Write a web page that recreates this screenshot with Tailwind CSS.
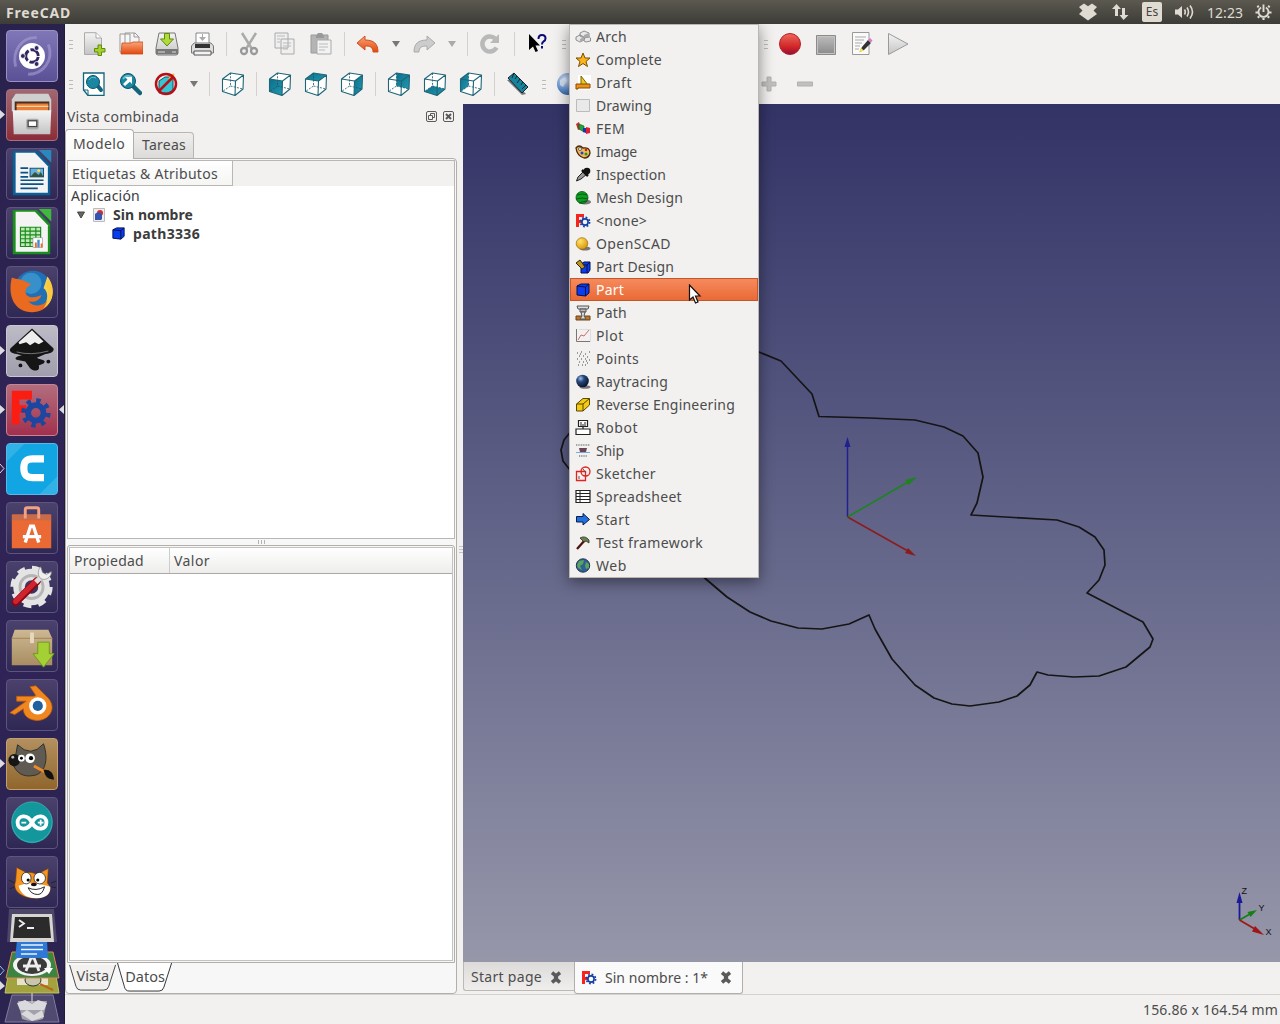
<!DOCTYPE html>
<html lang="es">
<head>
<meta charset="utf-8">
<title>FreeCAD</title>
<script src="https://cdn.jsdelivr.net/npm/@tailwindcss/browser@4"></script>
</head>
<body class="w-[1280px] h-[1024px] overflow-hidden flex flex-col bg-[#f2f1f0] text-[#4c4c4c] font-['Noto_Sans',sans-serif] text-[14px] leading-[19px]">

<svg class="absolute size-0">
  <defs>
    <linearGradient id="teal" x1="0" y1="0" x2="1" y2="1"><stop stop-color="#0b6f8a"/><stop offset="1" stop-color="#2397b0"/></linearGradient>
    <linearGradient id="gray" x1="0" y1="0" x2="0" y2="1"><stop stop-color="#f4f4f4"/><stop offset="1" stop-color="#c4c4c4"/></linearGradient>
    <linearGradient id="dgray" x1="0" y1="0" x2="0" y2="1"><stop stop-color="#bdbdbd"/><stop offset="1" stop-color="#8a8a8a"/></linearGradient>
    <linearGradient id="orange" x1="0" y1="0" x2="0" y2="1"><stop stop-color="#f9a57a"/><stop offset="1" stop-color="#e2480e"/></linearGradient>
    <linearGradient id="red" x1="0" y1="0" x2="0" y2="1"><stop stop-color="#f0685a"/><stop offset=".7" stop-color="#cc1f24"/><stop offset="1" stop-color="#8a1040"/></linearGradient>
    <linearGradient id="box" x1="0" y1="0" x2="0" y2="1"><stop stop-color="#cdb893"/><stop offset="1" stop-color="#a98d62"/></linearGradient>
    <radialGradient id="globe" cx=".35" cy=".3" r=".8"><stop stop-color="#d5e2f5"/><stop offset=".6" stop-color="#5b8acb"/><stop offset="1" stop-color="#2a5594"/></radialGradient>
    <radialGradient id="darkball" cx=".35" cy=".3" r=".7"><stop stop-color="#9fc0ea"/><stop offset=".4" stop-color="#27497d"/><stop offset="1" stop-color="#0a1730"/></radialGradient>
    <radialGradient id="gold" cx=".35" cy=".3" r=".8"><stop stop-color="#ffe36a"/><stop offset="1" stop-color="#d68f00"/></radialGradient>
    <symbol id="fc" viewBox="0 0 16 16"><path d="M1 1H9V4H4V7H7V10H4V14H1Z" fill="#f7231c"/><g fill="none" stroke="#123fa8"><circle cx="10" cy="9" r="3.100" stroke-width="1.600"/><circle cx="10" cy="9" r="4.600" stroke-width="1.700" stroke-dasharray="1.800 1.810"/></g></symbol>
    <symbol id="bluecube" viewBox="0 0 16 16"><path d="M2 4L6 2H14V11L10.500 14L2 13Z" fill="#0a3cf0" stroke="#04104a" stroke-linejoin="round"/><path d="M2 4L10.500 5L14 2M10.500 5V14" fill="none" stroke="#04104a"/></symbol>
    <symbol id="close" viewBox="0 0 12 12"><path d="M2.300 1.500L6 4.600L9.700 1.500M2.300 10.500L6 7.400L9.700 10.500M4 6H8" fill="none" stroke="#5a5a5a" stroke-width="3.300"/></symbol>
  </defs>
</svg>

<header class="h-6 shrink-0 flex items-center bg-linear-to-b from-[#5b5950] to-[#3d3c37] text-[#dfdbd2] pl-[6px] pr-[8px]">
  <span class="font-bold text-[14px]" data-w="65">FreeCAD</span>
  <div class="ml-auto flex items-center">
    <svg class="w-[18px] h-[18px] mr-[14px]" viewBox="0 0 18 18" fill="#dfdbd2"><path d="M5 .5L9 3.300L13 .5L18 4L14.500 7.500L18 11L9 17.500L0 11L3.500 7.500L0 4Z"/></svg>
    <svg class="w-[18px] h-[18px] mr-[13px]" viewBox="0 0 18 18" fill="#dfdbd2"><path d="M5.500 1L10 6H7V13H4V6H1ZM12.500 17L8.500 12H11V5H14V12H17.500Z"/></svg>
    <span class="w-[20px] h-[20px] rounded-[2px] bg-[#dfdbd2] text-[#45443e] text-[12px] leading-[20px] text-center mr-[12px]">Es</span>
    <svg class="w-[21px] h-[18px] mr-[12px]" viewBox="0 0 21 18"><path d="M1 6.500H4L8 3V15L4 11.500H1Z" fill="#dfdbd2"/><path d="M10.500 6.500Q12 9 10.500 11.500M13 4.500Q16 9 13 13.500M16 2.500Q21 9 16 15.500" fill="none" stroke="#dfdbd2" stroke-width="1.600"/></svg>
    <span class="mr-[12px]" data-w="36">12:23</span>
    <svg class="w-[17px] h-[18px]" viewBox="0 0 18 18" fill="none" stroke="#dfdbd2"><path d="M6.500 4.200A5.300 5.300 0 1 0 11.500 4.200M9 1V9" stroke-width="2"/><path d="M4 4L2.500 2.500M14 4L15.500 2.500M3.500 9.500H.5M14.500 9.500H17.500M4.500 13.500L3 15M13.500 13.500L15 15M9 15V17.500" stroke-width="2.300"/></svg>
  </div>
</header>

<div class="flex-1 min-h-0 flex">

<nav class="relative w-[65px] shrink-0 bg-linear-to-b from-[#29224c] via-[#302457] to-[#2b2350] border-r border-[#211b3d] pl-[6px] pt-[6px] flex flex-col gap-[7px]" id="dock">
  <div class="size-[52px] shrink-0 rounded-[4px] border border-[#9990c6] bg-linear-to-b from-[#8077b8] to-[#5b5196]"><svg viewBox="0 0 52 52"><path d="M9 37C5 21 15 6 31 7M43 14C49 30 38 45 22 45" fill="none" stroke="#a89fd2" stroke-width="3" opacity=".6"/><circle cx="26" cy="26" r="13.500" fill="#fff"/><circle cx="26" cy="26" r="6.500" fill="none" stroke="#322765" stroke-width="3" stroke-dasharray="11.600 2" stroke-dashoffset="-1"/><g fill="#322765" stroke="#fff" stroke-width=".8"><circle cx="16.500" cy="26" r="2.500"/><circle cx="30.800" cy="17.700" r="2.500"/><circle cx="30.800" cy="34.300" r="2.500"/></g></svg></div>
  <div class="size-[52px] shrink-0 rounded-[4px] border border-[#a5717c] bg-linear-to-b from-[#a06872] to-[#8c2c38]"><svg viewBox="0 0 52 52"><path d="M9 4H43L46 10V22H5V10Z" fill="#cfcfcf"/><path d="M8 12H44V22H8Z" fill="#4a2d20"/><path d="M10 14H43V22H10Z" fill="#e98037"/><path d="M10 17H43" stroke="#fbd3a3" stroke-width="1.500"/><path d="M6 21H46L45 46H7Z" fill="url(#gray)"/><rect x="20" y="30" width="13" height="11" rx="2" fill="#aaa"/><rect x="22" y="32" width="9" height="6" fill="#fff" stroke="#444" stroke-width="1.300"/></svg></div>
  <div class="size-[52px] shrink-0 rounded-[4px] border border-[#5c557e] bg-linear-to-b from-[#4a426c] to-[#302854]"><svg viewBox="0 0 52 52"><path d="M6 2H31L45 17V48H6Z" fill="#0a5f96"/><path d="M9 4H29L42.500 18V45.500H9Z" fill="#f4f4f4"/><path d="M33 1H46V14Z" fill="#2a88bd"/><path d="M14 20H22M14 24.500H22M14 29H22M14 32.500H38M14 36.500H38M14 41H32" stroke="#0b5386" stroke-width="1.800"/><rect x="24" y="20" width="14" height="9" fill="#65b0dd" stroke="#144b72"/><path d="M24 29L29 24L33 27L35 24L38 29Z" fill="#35523a"/><circle cx="33" cy="22.500" r="1.500" fill="#ffe24c"/></svg></div>
  <div class="size-[52px] shrink-0 rounded-[4px] border border-[#5c557e] bg-linear-to-b from-[#4a426c] to-[#302854]"><svg viewBox="0 0 52 52"><path d="M6 2H31L45 17V48H6Z" fill="#19901b"/><path d="M9 4H29L42.500 18V45.500H9Z" fill="#f4f4f4"/><path d="M33 1H46V14Z" fill="#3fb93b"/><path d="M14 20H35V40H14Z" fill="#bfe9b6"/><path d="M14 20H35V40H14ZM14 24H35M14 28H35M14 32H35M14 36H35M19 20V40M24 20V40M30 20V40" fill="none" stroke="#198a1b" stroke-width="1.200"/><rect x="27" y="31" width="10" height="10" fill="#fff" stroke="#888" stroke-width=".6"/><path d="M29 41V36H31V41M35 41V37H37V41" fill="#f36a21"/><path d="M31.500 41V33H34V41" fill="#3b8edb"/></svg></div>
  <div class="size-[52px] shrink-0 rounded-[4px] border border-[#5c557e] bg-linear-to-b from-[#4a426c] to-[#302854]"><svg viewBox="0 0 52 52"><circle cx="27" cy="24" r="20" fill="#1f70b5"/><circle cx="25" cy="17" r="11" fill="#4aa5d9" opacity=".6"/><path d="M42 10C52 22 49 42 31 46C44 39 44 26 38 22Z" fill="#fbd04a"/><path d="M5 11C9 13 13 12 17 14L25 18L20 22C17 29 23 33 31 31L36 29C33 37 25 37 22 35C27 42 37 41 41 36C47 30 43 21 42 18C50 32 43 47 26 47C9 47 0 32 5 11Z" fill="#ea6a1f"/><path d="M43 12C51 25 47 38 38 43C44 34 44 25 41 20Z" fill="#fbc83f"/></svg></div>
  <div class="size-[52px] shrink-0 rounded-[4px] border border-[#c9c7d2] bg-linear-to-b from-[#bdbbc6] to-[#a09eac]"><svg viewBox="0 0 52 52"><path d="M26 2.500L48 23C50 26 46 29 40 29L31 33C36 36 42 35 38 39L33 41C35 47 28 48 24 44L19 37L10 35C6 33 14 30 17 31L10 29C5 29 1 26 4 23Z" fill="#151515"/><path d="M26 4.500L38 16L33 19L29 17L24 20L20 17L13 19L12 17Z" fill="#eee"/><path d="M10 27Q25 31 43 26" stroke="#777" fill="none"/><circle cx="43" cy="37" r="2" fill="#111"/><circle cx="14" cy="41" r="2" fill="#111"/></svg></div>
  <div class="size-[52px] shrink-0 rounded-[4px] border border-[#c58494] bg-linear-to-b from-[#b26d7e] to-[#a22f4e]"><svg viewBox="0 0 52 52"><path d="M5 6H26V15H13V21H20V29H13V41H5Z" fill="#fb1c12"/><g fill="none" stroke="#1c46a0"><circle cx="30" cy="29" r="8" stroke-width="6"/><circle cx="30" cy="29" r="12.800" stroke-width="5" stroke-dasharray="4.500 5.550"/></g></svg></div>
  <div class="size-[52px] shrink-0 rounded-[4px] border border-[#56b9ea] bg-[#12a5e4] overflow-hidden"><svg viewBox="0 0 52 52"><path d="M0 0H18L0 18ZM52 34V52H34Z" fill="#50bfe9" opacity=".5"/><path d="M38.500 15.500H27C19 15.500 17.500 19 17.500 25C17.500 31 19 35 27 35H38.500" fill="none" stroke="#fff" stroke-width="7.500"/></svg></div>
  <div class="size-[52px] shrink-0 rounded-[4px] border border-[#5c557e] bg-linear-to-b from-[#4a426c] to-[#302854]"><svg viewBox="0 0 52 52"><path d="M5 12H46V47H5Z" fill="#ea6934"/><path d="M6 12H45L46 18H5Z" fill="#c76b48"/><path d="M19 16V7Q19 5 21 5H31Q33 5 33 7V16" fill="none" stroke="#f4a083" stroke-width="3"/><path d="M19 41L24.500 24H27.500L33 41M16.500 35H35.500" fill="none" stroke="#fff" stroke-width="3.500"/></svg></div>
  <div class="size-[52px] shrink-0 rounded-[4px] border border-[#5c557e] bg-linear-to-b from-[#4a426c] to-[#302854]"><svg viewBox="0 0 52 52"><circle cx="25.500" cy="26" r="13" fill="none" stroke="#e4e4e4" stroke-width="12"/><circle cx="25.500" cy="26" r="19.500" fill="none" stroke="#e4e4e4" stroke-width="5" stroke-dasharray="8 7.300"/><circle cx="25.500" cy="26" r="12" fill="none" stroke="#b5b5b5" stroke-width="3"/><path d="M9 42L31 20" stroke="#8c0712" stroke-width="8" stroke-linecap="round"/><path d="M9 41L31 19" stroke="#cf2330" stroke-width="5.500" stroke-linecap="round"/><path d="M30 21L37 14" stroke="#ddd" stroke-width="5"/><path d="M35 5C31 9 32 17 37 18C42 19 47 14 46 10L41 13L37 11Z" fill="#eee" stroke="#888" stroke-width=".7"/></svg></div>
  <div class="size-[52px] shrink-0 rounded-[4px] border border-[#5c557e] bg-linear-to-b from-[#4a426c] to-[#302854]"><svg viewBox="0 0 52 52"><path d="M8 9H43L47 18V46H5V18Z" fill="url(#box)"/><path d="M5 18H47" stroke="#a08459"/><path d="M24 12H28V23H24Z" fill="#e6d9c0"/><path d="M32 22H44V34H49L38 48L27 34H32Z" fill="#a4cf35" stroke="#6c9a18"/></svg></div>
  <div class="size-[52px] shrink-0 rounded-[4px] border border-[#5c557e] bg-linear-to-b from-[#4a426c] to-[#302854]"><svg viewBox="0 0 52 52"><path d="M24 7L30 6L43 19C53 31 42 43 30 42C20 41 17 35 17 30L8 36L3 34L20 22H10V17H28L30 16Z" fill="#f08620" stroke="#c35c06" stroke-width=".8"/><circle cx="32" cy="27" r="9" fill="#fff"/><circle cx="32" cy="27" r="5.300" fill="#20609e"/></svg></div>
  <div class="size-[52px] shrink-0 rounded-[4px] border border-[#c2a071] bg-linear-to-b from-[#b3905f] to-[#90662c]"><svg viewBox="0 0 52 52"><path d="M11 6Q25 20 38 5C44 22 39 37 27 38C17 40 10 35 7 28Z" fill="#5f5b53" stroke="#302f2b"/><ellipse cx="7.500" cy="22" rx="6" ry="6.500" fill="#161616"/><circle cx="6" cy="19" r="1.500" fill="#bbb"/><circle cx="15" cy="20" r="3.500" fill="#fff"/><circle cx="24" cy="20" r="5" fill="#fff"/><circle cx="15" cy="20" r="1.500"/><circle cx="25" cy="20" r="2.200"/><path d="M28 28L41 35" stroke="#ed8b27" stroke-width="3"/><path d="M38 32Q48 31 49 42Q40 43 38 32Z" fill="#111"/></svg></div>
  <div class="size-[52px] shrink-0 rounded-[4px] border border-[#5c557e] bg-linear-to-b from-[#4a426c] to-[#302854]"><svg viewBox="0 0 52 52"><circle cx="26" cy="25.500" r="21.500" fill="#13979c"/><circle cx="26" cy="25" r="21" fill="none" stroke="#57bfc2" opacity=".6"/><path d="M26 25.500C21 16 11 18 11 25.500S21 35 26 25.500S41 18 41 25.500S31 35 26 25.500Z" fill="none" stroke="#fff" stroke-width="4"/><path d="M15 25.500H20M32 25.500H38M35 22.500V28.500" stroke="#fff" stroke-width="1.800"/></svg></div>
  <div class="size-[52px] shrink-0 rounded-[4px] border border-[#5c557e] bg-linear-to-b from-[#4a426c] to-[#302854]"><svg viewBox="0 0 52 52"><path d="M10 11L20 16Q25 15 31 18L43 12L42 27C48 34 45 42 30 43C15 43 5 35 9 25Z" fill="#f5941f" stroke="#7b3f05" stroke-width=".6"/><path d="M12 30Q24 24 45 31Q46 42 31 43Q15 43 12 30Z" fill="#fff"/><ellipse cx="20" cy="22" rx="5" ry="6" fill="#fff" stroke="#222" stroke-width=".8"/><ellipse cx="34" cy="22" rx="6" ry="6" fill="#fff" stroke="#222" stroke-width=".8"/><circle cx="22" cy="24" r="1.600"/><circle cx="32" cy="24" r="1.600"/><ellipse cx="28" cy="28.500" rx="3" ry="1.800" fill="#111"/><path d="M22 32Q30 36 39 31Q37 39 32 39Q25 39 22 32Z" fill="#fff" stroke="#222"/><path d="M8 27L2 24M8 31L3 33M46 27L51 25M46 31L51 32" stroke="#222"/></svg></div>
  <!-- folded launchers -->
  <svg class="absolute left-0 top-[884px] w-[64px] h-[116px]" viewBox="0 908 64 116">
    <path d="M12 995H53L59 1022H5Z" fill="#514a70" stroke="#827c9b"/><path d="M18 1001H47L43 1019Q32 1023 22 1019Z" fill="#a2a2a8"/><path d="M17 1003L25 1000L32 1004L38 1000L47 1003L44 1010H20ZM21 1014L27 1010L34 1015L42 1010L44 1017L32 1021Z" fill="#dadade"/>
    <path d="M8 976H56L59 993H5Z" fill="#a2a33e" stroke="#c3c463"/><path d="M17 976H48V985H17Z" fill="#e5e4c9"/><ellipse cx="33" cy="980" rx="8" ry="6" fill="#c8c6ac" stroke="#333"/><path d="M40 984L53 990" stroke="#bd641c" stroke-width="2"/>
    <path d="M12 952H53L59 978H6Z" fill="#3c8442" stroke="#e4854f"/><ellipse cx="32" cy="965" rx="19" ry="11" fill="#f3f3f3"/><ellipse cx="32" cy="965" rx="15" ry="9" fill="#3b3b3b"/><path d="M26 971L31 958H34L39 971M23 966H41" fill="none" stroke="#eee" stroke-width="2.800"/><path d="M44 968H53L49 974Z" fill="#fff"/>
    <path d="M17 941H47L48 958H15Z" fill="#2f78d6"/><path d="M21 945H43M21 949.500H43M21 954H37" stroke="#eaf3ff" stroke-width="1.700"/>
    <path d="M9 909H54L57 942H7Z" fill="#5b5571" opacity=".7"/><path d="M12 914H52L54 942H10Z" fill="#d6d5d2"/><path d="M15 917H49L51 938H13Z" fill="#2b2b2b"/><path d="M19 920L24 923.500L19 927M27 928H34" stroke="#eee" stroke-width="1.800" fill="none"/>
    <path d="M32 993V1003" stroke="#ddd"/>
  </svg>
  <svg class="absolute left-0 top-0 w-[65px] h-[1000px]" viewBox="0 24 65 1000"><path d="M0 110L5 114.500L0 119ZM0 346L5 350.500L0 355ZM0 405L5 409.500L0 414ZM64 405L59 409.500L64 414ZM0 759L5 763.500L0 768ZM0 981L5 986L0 990Z" fill="#dcdbe2"/><path d="M0 464L4 468.500L0 473" fill="none" stroke="#dcdbe2"/><path d="M0 966L4 970.500L0 975" fill="none" stroke="#8ec7ee"/></svg>
</nav>

<main class="flex-1 min-w-0 flex flex-col">
  <div id="bar1" class="h-10 shrink-0 flex items-center"></div>
  <div id="bar2" class="h-10 shrink-0 flex items-center"></div>

  <div class="flex-1 min-h-0 flex">
    <section class="w-[398px] shrink-0 flex flex-col">
      <div class="h-[25px] shrink-0 flex items-center pl-[2px] pr-[9px]">
        <span data-w="112">Vista combinada</span>
        <svg class="ml-auto w-[11px] h-[11px]" viewBox="0 0 11 11" fill="none" stroke="#5a5a5a"><rect x=".5" y=".5" width="10" height="10" rx="1.500"/><path d="M4.500 4.500V2.500H8.500V6.500H6.500M2.500 4.500H6.500V8.500H2.500Z"/></svg>
        <svg class="ml-[6px] w-[11px] h-[11px]" viewBox="0 0 11 11" fill="none" stroke="#5a5a5a"><rect x=".5" y=".5" width="10" height="10" rx="1.500"/><path d="M3 3L8 8M8 3L3 8" stroke-width="2"/></svg>
      </div>
      <div class="h-[29px] shrink-0 flex items-end">
        <div class="relative z-10 w-[69px] h-[30px] -mb-px rounded-t-[4px] border border-b-0 border-[#b2afaa] bg-linear-to-b from-white to-[#f8f8f7] pl-[7px] pt-[4px]"><span data-w="52">Modelo</span></div>
        <div class="w-[60px] h-[26px] rounded-tr-[4px] border-t border-r border-[#b9b6b1] bg-linear-to-b from-[#efeeed] to-[#dddbd9] pl-[8px] pt-[2px]"><span data-w="44">Tareas</span></div>
      </div>
      <div class="w-[392px] h-[836px] shrink-0 rounded-b-[4px] rounded-tr-[4px] border border-[#b2afaa] bg-[#f7f7f7] p-px flex flex-col">
        <div class="h-[379px] shrink-0 border border-[#b9b7b3] bg-white flex flex-col">
          <div class="h-[25px] shrink-0 bg-[#f2f1f0] flex"><div class="w-[165px] border-r border-b border-[#bab7b3] bg-linear-to-b from-white to-[#f5f5f4] pl-[4px] pt-[3px]"><span data-w="146">Etiquetas &amp; Atributos</span></div></div>
          <div class="pl-[3px] h-[19px] text-[#3c3c3c]"><span data-w="69">Aplicación</span></div>
          <div class="pl-[9px] h-[19px] flex items-center font-bold text-[#3c3c3c]">
            <svg class="w-[8px] h-[8px]" viewBox="0 0 8 8"><path d="M.5 1H7.500L4 7Z" fill="#666" stroke="#444"/></svg>
            <svg class="ml-[7px] w-[14px] h-[16px]" viewBox="0 0 14 16"><path d="M1.500 1.500H12.500V14.500H1.500Z" fill="#eee" stroke="#bbb"/><circle cx="8" cy="6" r="3" fill="#d92a2a"/><path d="M3 7L5 5.500H8L10 7V12L9 13H3Z" fill="#3454b0"/></svg>
            <span class="ml-[7px]" data-w="80">Sin nombre</span>
          </div>
          <div class="pl-[43px] h-[19px] flex items-center font-bold text-[#3c3c3c]">
            <svg class="size-[15px]"><use href="#bluecube"/></svg>
            <span class="ml-[7px]" data-w="67">path3336</span>
          </div>
        </div>
        <div class="h-[6px] shrink-0 flex items-center justify-center gap-[2px]"><i class="w-px h-[4px] bg-[#b5b3b0]"></i><i class="w-px h-[4px] bg-[#b5b3b0]"></i><i class="w-px h-[4px] bg-[#b5b3b0]"></i></div>
        <div class="h-[418px] shrink-0 rounded-t-[3px] border border-[#b2afaa] p-px bg-[#f7f7f7]">
          <div class="h-full border border-[#c4c2be] bg-white">
            <div class="h-[26px] flex border-b border-[#aaa8a4] bg-linear-to-b from-white to-[#eeedec] pt-[3px]">
              <div class="w-[100px] -mt-[3px] pt-[3px] border-r border-[#cfcdca] pl-[4px]"><span data-w="70">Propiedad</span></div>
              <div class="pl-[4px]"><span data-w="36">Valor</span></div>
            </div>
          </div>
        </div>
        <svg class="w-[130px] h-[30px]" viewBox="67 962 130 30"><path d="M67.500 964L74 986Q75 990 79 990H103Q107 990 108 986L115 964Z" fill="#f2f1f0"/><path d="M67.500 964L74 986Q75 990 79 990H103Q107 990 108 986L115 964" fill="none" stroke="#444"/><path d="M118 962L124 986Q125 991 129 991H160Q163 991 164 987L172 962Z" fill="#fff"/><path d="M117 962L124 986Q125 991 129 991H160Q164 991 165 987L173 962" fill="none" stroke="#333"/><g fill="#4c4c4c" font-size="14"><text x="74.500" y="981" textLength="34" lengthAdjust="spacingAndGlyphs">Vista</text><text x="125" y="982" textLength="41" lengthAdjust="spacingAndGlyphs">Datos</text></g></svg>
      </div>
    </section>

    <section class="flex-1 min-w-0 flex flex-col">
      <svg class="w-[817px] h-[858px] shrink-0 bg-linear-to-b from-[#333366] to-[#9797aa]" viewBox="463 104 817 858">
        <g fill="none" stroke="#151515" stroke-width="1.700" stroke-linejoin="round">
          <path d="M755 351L759 352L781 361L812 394L819 416.500L870 418L915 420L944 427L963 436L978 453L983 477L977 503L971 515L1057 520L1079 527L1095 537L1104 550L1105 565L1099 580L1087 593L1143 622L1153 639L1150 647L1126 667L1099 676L1074 677L1048 675L1037 672L1030 685L1017 696L999 702L970 706L952 704L934 698L915 685L892 659L875 629L869 615L849 624L822 629L798 628L771 621L750 612L727 597L700 574"/>
          <path d="M572 430L564 440L561 450L563 461L570 470"/>
        </g>
        <path d="M847.500 517V445" stroke="#20208f" stroke-width="1.500"/><path d="M847.500 437L850.500 447H844.500Z" fill="#20208f"/>
        <path d="M847.500 517L907 482.500" stroke="#1b851b" stroke-width="1.500"/><path d="M917 477L908.500 485L905.500 480Z" fill="#1b851b"/>
        <path d="M847.500 517L907 550.500" stroke="#8c1c1c" stroke-width="1.500"/><path d="M916 556L905 553L908 548Z" fill="#8c1c1c"/>
        <path d="M1239.500 920V900" stroke="#1a1a96" stroke-width="1.800"/><path d="M1239.500 892L1242.500 903H1236.500Z" fill="#1a1a96"/>
        <path d="M1239.500 920L1250 914" stroke="#168016" stroke-width="1.800"/><path d="M1257 910L1250.500 917L1247.500 912Z" fill="#168016"/>
        <path d="M1239.500 920L1254 928.500" stroke="#a01616" stroke-width="1.800"/><path d="M1264 935L1252 931.500L1255 926Z" fill="#a01616"/>
        <g font-family="Liberation Sans, sans-serif" font-size="9" fill="#111"><text x="1241.500" y="894">Z</text><text x="1258.500" y="911">Y</text><text x="1265.500" y="935">X</text></g>
      </svg>
      <div class="h-[32px] shrink-0 flex items-start">
        <div class="w-[111px] h-[29px] border-l border-b border-[#bcb9b5] rounded-bl-[3px] bg-linear-to-b from-[#dddbd9] to-[#efeeed] flex items-center pl-[7px]"><span data-w="71">Start page</span><svg class="ml-[7px] mt-[2px] w-[14px] h-[13px]"><use href="#close"/></svg></div>
        <div class="w-[169px] h-[32px] border-x border-b border-[#b2afaa] rounded-b-[3px] bg-[#fafafa] flex items-center pl-[6px]"><svg class="size-[16px]"><use href="#fc"/></svg><span class="ml-[8px]" data-w="103">Sin nombre : 1*</span><svg class="ml-[11px] w-[14px] h-[13px]"><use href="#close"/></svg></div>
      </div>
    </section>
  </div>
  <footer class="h-[30px] shrink-0 border-t border-[#d5d3d0] flex items-center justify-end pr-[2px]"><span data-w="135">156.86 x 164.54 mm</span></footer>
</main>
</div>

<div class="absolute left-[459px] top-[546px] flex flex-col gap-[2px]"><i class="w-[4px] h-px bg-[#c5c3c0]"></i><i class="w-[4px] h-px bg-[#c5c3c0]"></i><i class="w-[4px] h-px bg-[#c5c3c0]"></i></div>

<div id="menu" class="absolute left-[569px] top-[24px] w-[190px] h-[554px] border border-[#bab7b3] bg-[#f2f1f0] shadow-[0_4px_14px_rgba(0,0,0,0.45)]"></div>
<div class="absolute left-[540px] top-0 w-[250px] h-6 bg-linear-to-b from-[#5b5950] to-[#3d3c37]"></div>
<svg class="absolute left-[688px] top-[284px] w-[14px] h-[21px]" viewBox="0 0 14 21"><path d="M1.500 1V16L5 13L7.500 19L10 18L7.500 12H12Z" fill="#fff" stroke="#111" stroke-width="1.200"/></svg>

<script>
const svg24 = inner => `<svg class="size-6" viewBox="0 0 24 24" fill="none">${inner}</svg>`;
const btn = inner => `<div class="w-9 shrink-0 flex justify-center">${svg24(inner)}</div>`;
const dots = '<i class="w-[4px] h-px bg-[#bdbbb8]"></i>'.repeat(3);
const handle = w => `<div class="shrink-0 flex flex-col items-center gap-[3px]" style="width:${w}px">${dots}</div>`;
const sep = w => `<div class="shrink-0 flex justify-center" style="width:${w}px"><i class="w-px h-6 bg-[#d3d1ce]"></i></div>`;
const gap = w => `<div class="shrink-0" style="width:${w}px"></div>`;
const arrow = c => `<div class="w-5 shrink-0 flex justify-center"><svg class="w-[8px] h-[6px]" viewBox="0 0 8 6"><path d="M0 0H8L4 6Z" fill="${c}"/></svg></div>`;
const faces = {front:'1.500,7 14.500,9 14,23.500 1.500,19.500', top:'1.500,7 9.500,1 22.500,3 14.500,9', right:'14.500,9 22.500,3 22,17 14,23.500', rear:'9.500,1 22.500,3 22,17 9.500,14', bottom:'1.500,19.500 9.500,14 22,17 14,23.500', left:'1.500,7 9.500,1 9.500,14 1.500,19.500'};
const cube = f => btn(`<path d="M1.500 7L9.500 1L22.500 3L22 17L14 23.500L1.500 19.500Z" fill="#fff"/>${f ? `<polygon points="${faces[f]}" fill="url(#teal)"/>` : ''}<path d="M9.500 1V14L1.500 19.500M9.500 14L22 17" stroke="#11566b" stroke-width=".8" stroke-dasharray="2 1.300"/><path d="M1.500 7L9.500 1L22.500 3L22 17L14 23.500L1.500 19.500ZM1.500 7L14.500 9L22.500 3M14.500 9L14 23.500" stroke="#1f6577" stroke-width="1.100" stroke-linejoin="round"/>`);

document.getElementById('bar1').innerHTML = [
  handle(12),
  btn('<path d="M1.500 .7H13L18.500 6V22.500H1.500Z" fill="url(#gray)" stroke="#aaa"/><path d="M13 1V6H18" fill="#fff" stroke="#aaa"/><path d="M15 13H18.500V16.500H22V20H18.500V23.500H15V20H11.500V16.500H15Z" fill="#a5d030" stroke="#5c8d0b"/>'),
  btn('<path d="M1 2H11V20H1ZM6 1H16L20 5V18H6Z" fill="#f6f6f6" stroke="#999"/><path d="M15 1V5H20" stroke="#999"/><path d="M3 11H12L14 10H24V22H2Z" fill="url(#orange)" stroke="#cb4a16" stroke-width=".8"/>'),
  btn('<path d="M4 1H20L23 16V21Q23 23 21 23H3Q1 23 1 21V16Z" fill="url(#gray)" stroke="#777"/><path d="M1 17H23V22H1Z" fill="#777"/><path d="M3 20H10M17 20H21" stroke="#ddd"/><path d="M9.500 1.500H14.500V7H18.500L12 14L5.500 7H9.500Z" fill="#b2da3c" stroke="#5c8d0b"/>'),
  btn('<path d="M5 1H18V12H5Z" fill="#fff" stroke="#888"/><path d="M11 2V5H8L11.500 9L15 5H12V2" fill="#aaa"/><path d="M3 11H20L22.500 14V21H.5V14Z" fill="#dedede" stroke="#777"/><path d="M4 12H19V16H4Z" fill="#333"/><path d="M3 19H20V23H3Z" fill="#f3f3f3" stroke="#555"/>'),
  sep(10),
  btn('<path d="M5 1L15 17M19 1L9 17" stroke="#aaa" stroke-width="2.500"/><circle cx="7" cy="19" r="3" stroke="#999" stroke-width="2.300"/><circle cx="17" cy="19" r="3" stroke="#999" stroke-width="2.300"/>'),
  btn('<path d="M2 1H15V16H2ZM8 7H21V22H8Z" fill="#efefef" stroke="#aaa"/><path d="M4 4H12M4 7H7M4 10H7M10 11H18M10 14H18M10 17H15" stroke="#bbb"/>'),
  btn('<path d="M2 3H19V21H2Z" fill="#b4b4b4" stroke="#999"/><path d="M7 4L9 1H13L15 4V6H7Z" fill="#999"/><path d="M8 8H22V22H8Z" fill="#f2f2f2" stroke="#aaa"/><path d="M10 12H19M10 15H19M10 18H16" stroke="#bbb"/>'),
  sep(11),
  btn('<path d="M1 11L9 4V8C18 8 22 12 22 20H17C17 15 14 14 9 14V18Z" fill="url(#orange)" stroke="#cf501c" stroke-linejoin="round"/>'),
  arrow('#777'),
  btn('<path d="M23 11L15 4V8C6 8 2 12 2 20H7C7 15 10 14 15 14V18Z" fill="#ccc" stroke="#aaa" stroke-linejoin="round"/>'),
  arrow('#aaa'),
  sep(10),
  btn('<path d="M18.500 15.500A7.500 7.500 0 1 1 17 6.500" stroke="#b9b9b9" stroke-width="4.500"/><path d="M21 2V11H12Z" fill="#b9b9b9"/>'),
  sep(12),
  btn('<path d="M4 3V19L8 15.500L10.500 21L13 20L10.500 14.500H15Z" transform="translate(-1 -1)" fill="#000"/><path d="M12.500 7Q12.500 3 16 3Q19.500 3 19.500 6.500Q19.500 8.500 17.500 9.500Q16 10.500 16 12.500M16 14V16.500" stroke="#0a0a78" stroke-width="2"/>'),
  handle(16), gap(187), handle(13),
  btn('<circle cx="12" cy="12" r="10.500" fill="url(#red)" stroke="#b32025"/>'),
  btn('<path d="M2.500 3.500H21.500V22.500H2.500Z" fill="url(#dgray)" stroke="#8b8b8b"/><path d="M3.500 4.500H20.500V21.500H3.500Z" stroke="#c4c4c4"/>'),
  btn('<path d="M2.500 .5H19V22.500H2.500Z" fill="#fafafa" stroke="#999"/><path d="M5 5H16M5 8H14M5 11H12M5 14H10M5 17H9" stroke="#aaa"/><path d="M9.500 20L12 15L18 8L21 11L14 18Z" fill="#333"/><path d="M9 20.500L11 16L14 18.500Z" fill="#f2e25a"/><path d="M18 8L20 6L22.500 8.500L20.500 11Z" fill="#d77bc5"/>'),
  btn('<path d="M2.500 1.500L22 12L2.500 22.500Z" fill="url(#gray)" stroke="#9a9a9a"/>')
].join('');

const lens = '<circle cx="10" cy="9" r="7.500" fill="#1b86a1" stroke="#0b5368"/><path d="M5 7Q8 2 14 5" stroke="#6bc0d2" stroke-width="1.500"/>';
document.getElementById('bar2').innerHTML = [
  handle(11),
  btn('<path d="M1.500 1H22V23.500H6L1.500 18Z" fill="#fff" stroke="#13647b" stroke-width="1.300"/><path d="M1.500 18H6V23.500" stroke="#13647b"/><path d="M15 13L19 18" stroke="#13647b" stroke-width="4" stroke-linecap="round"/><circle cx="11" cy="10" r="6.500" fill="#1b86a1" stroke="#0b5368"/><path d="M7 8Q9 4 14 6" stroke="#6bc0d2"/>'),
  btn('<path d="M15 14L22 21" stroke="#13647b" stroke-width="4.500" stroke-linecap="round"/>' + lens + '<path d="M7 5H14V12L11.800 9.800L7 14L5 12L9.500 7.500Z" fill="#fff"/>'),
  btn('<path d="M5 9L11 5H19V18L14 21H5Z" fill="#35c6d1" stroke="#1c4f58"/><path d="M15 7L20 2" stroke="#e9c22f" stroke-width="2"/><circle cx="12" cy="12" r="10" stroke="#b80e18" stroke-width="2.500"/><path d="M5 19L19 5" stroke="#b80e18" stroke-width="2.500"/>'),
  arrow('#777'), sep(11), cube(), sep(11), cube('front'), cube('top'), cube('right'), sep(11),
  cube('rear'), cube('bottom'), cube('left'), sep(11),
  btn('<path d="M1 8L16 23L20 22L6 7Z" fill="#777"/><path d="M2 6L8 1L22 15L16 21Z" fill="#16849c" stroke="#17272c"/><path d="M8 1L6 6M11 4L9 7M14 7L11 11M17 10L15 13M20 13L16 17" stroke="#17272c"/>'),
  handle(15),
  btn('<circle cx="11" cy="12" r="11" fill="url(#globe)"/><path d="M3 8L8 5L10 9L6 15L3 13Z" fill="#e4ecf6" opacity=".7"/>'),
  gap(164),
  btn('<path d="M10 5H14V10H19V14H14V19H10V14H5V10H10Z" fill="#c1c0bf" stroke="#b1b0af"/>'),
  btn('<path d="M4.500 10H19.500V14H4.500Z" fill="#c1c0bf" stroke="#b1b0af"/>')
].join('');

const items = [
  ['Arch',31,'<path d="M1 8L5 6L9 8V11L5 13L1 11ZM5 4L9 2L14 4V8L9 9L5 7ZM9 9L13 7L15.500 9V12L11 13L9 12Z" fill="#e8e8e8" stroke="#777" stroke-width=".8"/><path d="M5 10L9 8V11L5 13ZM9 6L14 4V8L9 9Z" fill="#aaa"/>'],
  ['Complete',66,'<path d="M8 1L10 6H15L11 9.500L12.500 14.500L8 11.500L3.500 14.500L5 9.500L1 6H6Z" fill="#fbb51c" stroke="#7a4e00"/>'],
  ['Draft',36,'<path d="M3 0H16V15H3Z" fill="#fff"/><path d="M6 10V1L13 10Z" fill="#e8cb1c" stroke="#7a6500"/><path d="M1 9H15V13H3V14H1Z" fill="#e8921c" stroke="#8a4b00"/>'],
  ['Drawing',56,'<path d="M1.500 1.500H14.500V13.500H1.500Z" fill="#e9e9e9" stroke="#bbb"/>'],
  ['FEM',29,'<path d="M1 3L4 1L6 8L3 9Z" fill="#c0302a"/><path d="M4 3L9 5V11L4 8Z" fill="#19a835" stroke="#0a5517" stroke-width=".6"/><path d="M8 7L11 7V12L8 11Z" fill="#2330b0"/><path d="M11 6L15 7V12L11 13Z" fill="#df2030"/>'],
  ['Image',41,'<path d="M1 4Q4 0 8 4Q15 3 15 9Q14 14 9 14Q2 12 1 4Z" fill="#f0b85a" stroke="#4c2b08" stroke-width="1.300"/><circle cx="5" cy="5" r="1.500" fill="#fff" stroke="#333" stroke-width=".7"/><circle cx="11" cy="6" r="1.300" fill="#c22"/><circle cx="7" cy="9" r="1.500" fill="#2740c8"/><circle cx="11" cy="10" r="1.500" fill="#1c9a30"/>'],
  ['Inspection',70,'<path d="M1.500 14L3 10L9 4L12 7L6 12Z" fill="#999" stroke="#222"/><path d="M7 3L13 9" stroke="#111" stroke-width="2.500"/><circle cx="12" cy="4" r="3.300" fill="#111"/>'],
  ['Mesh Design',87,'<ellipse cx="10" cy="12" rx="6" ry="2.500" fill="#777"/><circle cx="7" cy="7.500" r="6" fill="#0da020" stroke="#07500f" stroke-width=".8"/><path d="M2 5Q8 3 12 5M1 9Q8 7 13 9M4 13Q9 11 12 11" stroke="#063f0c" stroke-width=".7"/>'],
  ['<none>',51,'<use href="#fc"/>'],
  ['OpenSCAD',75,'<ellipse cx="10" cy="12.500" rx="5.500" ry="2" fill="#777"/><circle cx="7" cy="7.500" r="5.800" fill="url(#gold)" stroke="#9c6a00" stroke-width=".7"/>'],
  ['Part Design',78,'<path d="M6 5L9 3H15V11L13 14H6Z" fill="#0a3cf0" stroke="#04104a"/><path d="M6 6H12V14M12 6L15 3" stroke="#04104a"/><path d="M1 4L5 1L10 8L7 10Z" fill="#b99522" stroke="#332700"/>'],
  ['Part',28,'<use href="#bluecube"/>'],
  ['Path',31,'<path d="M1 11H15V15H1Z" fill="#b7772e" stroke="#704314"/><path d="M2 1H14L13 4H3Z" fill="#ddd" stroke="#555"/><path d="M5 4H11V7H5Z" fill="#bbb" stroke="#555"/><path d="M6 7H10L9 11L11 14H5L7 11Z" fill="#ddd" stroke="#555"/>'],
  ['Plot',28,'<path d="M1.500 1V13.500H15" stroke="#777"/><path d="M3 12L6 7L9 8L14 2" stroke="#cc6d6d"/><path d="M15.500 1V14M4 1.500H15" stroke="#ddd"/>'],
  ['Points',43,'<path d="M2 2h1M6 1h1M10 3h1M14 1h1M4 5h1M8 5h1M12 6h1M2 8h1M6 8h1M10 8h1M14 9h1M4 11h1M8 11h1M12 12h1M3 14h1M7 14h1M10 14h1M5 3h1M11 10h1" stroke="#444"/>'],
  ['Raytracing',72,'<ellipse cx="10" cy="13" rx="5.500" ry="1.800" fill="#777"/><circle cx="7.500" cy="7" r="6.300" fill="url(#darkball)"/>'],
  ['Reverse Engineering',139,'<path d="M1.500 7L8 1.500H14.500V8L8 14H1.500Z" fill="#f4ca12" stroke="#594600"/><path d="M1.500 7H8V14M8 7L14.500 1.500" stroke="#594600"/>'],
  ['Robot',42,'<path d="M3.500 .5H12.500V6.500H3.500ZM1 9H15V14.500H1ZM8 6.500V9" fill="#fff" stroke="#222" stroke-width="1.200"/><path d="M5 3H7M9 3H11M5 5H11" stroke="#222"/>'],
  ['Ship',28,'<path d="M1 2H15" stroke="#888" stroke-dasharray="1 .7" stroke-width="1.500"/><path d="M4 5H12L11 9H5Z" fill="#6a4558"/><path d="M1 9.500H15" stroke="#7ba8df"/><path d="M4 13H12" stroke="#999" stroke-dasharray="1 .8" stroke-width="2"/>'],
  ['Sketcher',60,'<path d="M1.500 5.500H10.500V14.500H1.500Z" stroke="#e0231d" stroke-width="1.300"/><circle cx="10.500" cy="5.500" r="4.500" stroke="#e0231d" stroke-width="1.300"/><path d="M4 10V13M8 3L11 7" stroke="#555"/>'],
  ['Spreadsheet',86,'<path d="M1 1.500H15V13.500H1Z" fill="#fff" stroke="#222" stroke-width="1.200"/><path d="M1 4.500H15M1 7.500H15M1 10.500H15M5 2V14" stroke="#222"/>'],
  ['Start',34,'<path d="M1.500 4.500H8V1.500L14.500 7.500L8 13V10H1.500Z" fill="#2070e0" stroke="#0a1c48"/>'],
  ['Test framework',107,'<path d="M2 14L10 5" stroke="#4f1210" stroke-width="2.300"/><path d="M5 3Q10 0 14 5L14 8L11 6L9 7Z" fill="#6d7d50" stroke="#2c3320" stroke-width=".8"/>'],
  ['Web',31,'<circle cx="8" cy="7.500" r="6.700" fill="#2f5f96" stroke="#20344e"/><path d="M4 3L9 2L8 6L5 8L7 12L3 10L2 7ZM11 4L14 6V10L11 11L10 8Z" fill="#5aa55c"/>']
];
document.getElementById('menu').innerHTML = items.map(([t, w, ic]) => {
  const on = t === 'Part';
  return `<div class="${on ? 'h-[23px] flex items-center pl-[4px] border border-[#c2572b] bg-linear-to-b from-[#f68a5c] to-[#e96a35] text-white' : 'h-[23px] flex items-center pl-[5px]'}"><svg class="size-4 mr-[5px]" viewBox="0 0 16 16" fill="none">${ic}</svg><span data-w="${w}">${t.replace('<', '&lt;').replace('>', '&gt;')}</span></div>`;
}).join('');

// keep every label at its nominal width
function fitLabels() {
  document.querySelectorAll('[data-w]').forEach(el => {
    el.style.whiteSpace = 'nowrap';
    el.style.display = 'inline-block';
    el.style.letterSpacing = '0px';
    const n = el.textContent.length, want = +el.dataset.w;
    let ls = 0;
    for (let pass = 0; pass < 3; pass++) {
      ls += (want - el.getBoundingClientRect().width) / n;
      el.style.letterSpacing = ls + 'px';
    }
  });
}
fitLabels();
window.addEventListener('load', () => { fitLabels(); requestAnimationFrame(fitLabels); setTimeout(fitLabels, 60); });
document.fonts.ready.then(fitLabels);
</script>
</body>
</html>
